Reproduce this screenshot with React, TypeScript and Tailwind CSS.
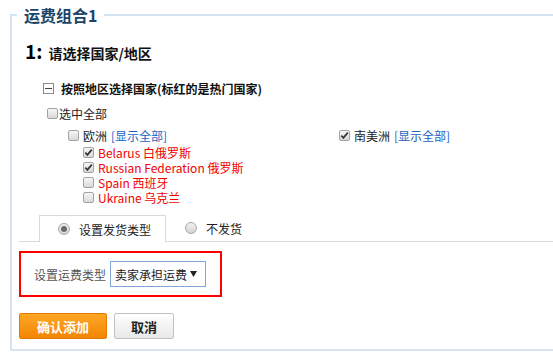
import React from 'react'

/**
 * Small checkbox drawn like the old Windows one
 */
const Box: React.FC<{ checked?: boolean }> = ({ checked }) => (
  <span className="inline-flex h-[11px] w-[11px] shrink-0 items-center justify-center rounded-[2px] border border-[#a3a3a3] bg-linear-to-b from-[#f6f6f6] to-[#d9d9d9]">
    {checked && (
      <svg width="9" height="9" viewBox="0 0 9 9">
        <path d="M1.3 4.6 L3.4 6.8 L7.8 1.6" fill="none" stroke="#3a3a3a" strokeWidth="1.8" />
      </svg>
    )}
  </span>
)

const Radio: React.FC<{ checked?: boolean }> = ({ checked }) => (
  <span className="inline-flex h-[12px] w-[12px] shrink-0 items-center justify-center rounded-full border border-[#a8a8a8] bg-linear-to-b from-[#f2f2f2] to-[#d4d4d4]">
    {checked && <span className="h-[6px] w-[6px] rounded-full bg-[#6b6b6b]" />}
  </span>
)

const countries = [
  { name: 'Belarus 白俄罗斯', checked: true },
  { name: 'Russian Federation 俄罗斯', checked: true },
  { name: 'Spain 西班牙', checked: false },
  { name: 'Ukraine 乌克兰', checked: false },
]

export default function App() {
  return (
    <div className="h-[359px] w-[553px] overflow-hidden bg-white pt-[4px] font-['Noto_Sans_CJK_SC',sans-serif] text-[12px] leading-[15px] text-[#222]">
      <fieldset className="ml-[10px] w-[580px] border-2 border-[#d6e3f0] pb-[10px]">
        <legend className="ml-[5px] px-[7px] text-[16px] leading-[22px] font-bold text-[#1b4468]">运费组合1</legend>

        {/* Step title */}
        <div className="mt-[13px] ml-[13px] flex h-[24px] items-baseline">
          <span className="text-[19px] leading-[24px] font-bold text-black">1:</span>
          <span className="ml-[6px] text-[14px] leading-[18px] font-bold text-[#111]">请选择国家/地区</span>
        </div>

        <div className="mt-[17px] ml-[31px] flex h-[16px] items-center">
          <span className="flex h-[11px] w-[11px] items-center justify-center border border-[#8a8a8a] bg-white">
            <span className="h-[1px] w-[7px] bg-[#444]" />
          </span>
          <span className="ml-[7px] font-bold text-[#111]">按照地区选择国家(标红的是热门国家)</span>
        </div>

        <label className="mt-[9px] ml-[35px] flex h-[16px] items-center">
          <Box />
          <span className="ml-[1px]">选中全部</span>
        </label>

        <div className="mt-[6px] ml-[56px] grid grid-cols-[271px_1fr]">
          <div>
            <div className="flex h-[16px] items-center">
              <Box />
              <span className="ml-[4px]">欧洲</span>
              <span className="ml-[4px] text-[#1a62bf]">[显示全部]</span>
            </div>
            <div className="mt-[2px] ml-[15px]">
              {countries.map((c) => (
                <div key={c.name} className="flex h-[15px] items-center">
                  <Box checked={c.checked} />
                  <span className="ml-[4px] leading-[14px] text-[#f20000]">{c.name}</span>
                </div>
              ))}
            </div>
          </div>
          <div className="flex h-[16px] items-center">
            <Box checked />
            <span className="ml-[4px]">南美洲</span>
            <span className="ml-[4px] text-[#1a62bf]">[显示全部]</span>
          </div>
        </div>

        {/* Tabs */}
        <div className="mt-[10px] ml-[7px] flex h-[27px] border-b border-[#d9d9d9]">
          <div className="ml-[20px] -mb-px flex h-[27px] w-[127px] items-center border border-b-0 border-[#d9d9d9] bg-white pl-[18px]">
            <Radio checked />
            <span className="ml-[9px] text-[#222]">设置发货类型</span>
          </div>
          <div className="ml-[19px] flex items-center">
            <Radio />
            <span className="ml-[9px] text-[#222]">不发货</span>
          </div>
        </div>

        <div className="mt-[9px] ml-[7px] flex h-[46px] w-[203px] items-center border-2 border-[#ff0000] pl-[13px]">
          <span className="whitespace-nowrap text-[#555]">设置运费类型</span>
          <div className="ml-[4px] flex h-[26px] w-[96px] shrink-0 items-center justify-between border border-[#7fa8d9] bg-white pr-[8px] pl-[4px]">
            <span className="whitespace-nowrap text-[12px] text-[#222]">卖家承担运费</span>
            <svg width="7" height="6" viewBox="0 0 7 6">
              <path d="M0 0 H7 L3.5 6 Z" fill="#222" />
            </svg>
          </div>
        </div>

        <div className="mt-[16px] ml-[7px] flex gap-[7px]">
          <button className="flex h-[26px] w-[88px] items-center justify-center rounded-[2px] border border-[#e47c00] bg-linear-to-b from-[#ffa623] to-[#f28500] text-[13px] font-bold text-white">
            确认添加
          </button>
          <button className="flex h-[26px] w-[60px] items-center justify-center rounded-[2px] border border-[#c2c2c2] bg-linear-to-b from-white to-[#e8e8e8] text-[13px] font-bold text-[#222]">
            取消
          </button>
        </div>
      </fieldset>
    </div>
  )
}
